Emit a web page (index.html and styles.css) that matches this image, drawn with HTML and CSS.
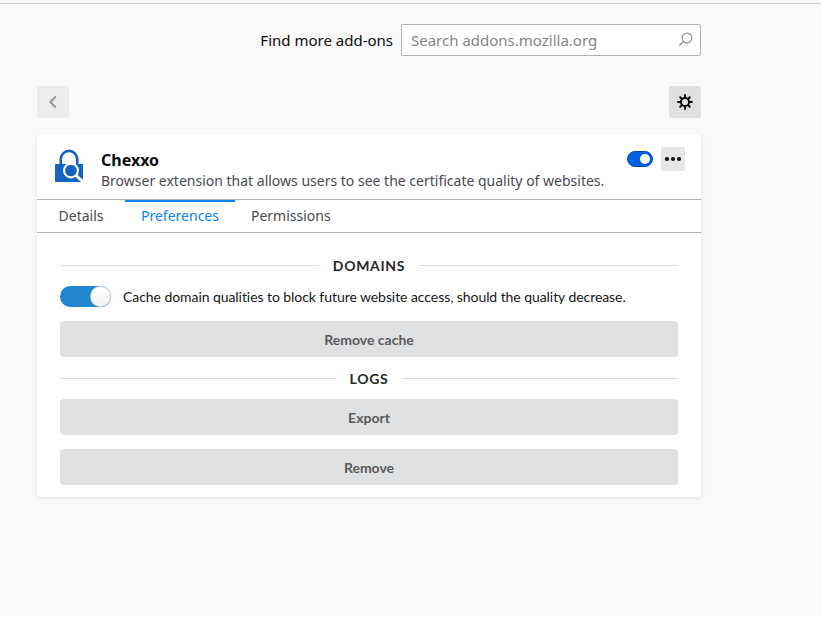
FILE: index.html
```html
<!DOCTYPE html>
<html lang="en">
<head>
<meta charset="utf-8">
<title>Add-ons Manager</title>
<link rel="stylesheet" href="styles.css">
</head>
<body>
<main class="page">
  <div class="search-row">
    <label class="search-label" for="search">Find more add-ons</label>
    <div class="search-box">
      <input id="search" class="search-input" type="text" placeholder="Search addons.mozilla.org">
      <svg class="search-icon" width="16" height="16" viewBox="0 0 16 16" fill="none" stroke="#979797" stroke-width="1.2"><circle cx="9" cy="6" r="4.9"/><path d="M5.4 9.5L1.4 13.5" stroke-width="1.5"/></svg>
    </div>
  </div>
  <div class="toolbar">
    <button class="tool back" aria-label="Back"><svg width="16" height="16" viewBox="0 0 16 16" fill="none" stroke="#979797" stroke-width="2" stroke-linecap="round" stroke-linejoin="round"><path d="M10.3 3L5.3 8l5 5"/></svg></button>
    <button class="tool" aria-label="Tools"><svg width="16" height="16" viewBox="0 0 16 16" fill="none" stroke="#0c0c0d" stroke-width="2"><circle cx="8" cy="8" r="4.1"/><path stroke-linecap="round" d="M8 1v2.500M8 12.500v2.500M1 8h2.500M12.500 8H15M3.200 3.200l1.600 1.600M11.200 11.200l1.600 1.600M3.200 12.800l1.600-1.600M11.200 4.800l1.600-1.600"/></svg></button>
  </div>
  <section class="card">
    <header class="addon">
      <svg class="addon-icon" width="32" height="34" viewBox="0 0 32 34"><path d="M5.800 16V10.100a8.200 8.200 0 0 1 16.400 0V16" fill="none" stroke="#1565c0" stroke-width="2.600"/><rect y="15" width="28" height="18" rx="1" fill="#1565c0"/><path d="M20.500 26L30 34.500" stroke="#fff" stroke-width="3"/><circle cx="16" cy="21.500" r="6.900" fill="#1565c0" stroke="#fff" stroke-width="2.100"/></svg>
      <div class="addon-text">
        <h1 class="addon-name">Chexxo</h1>
        <p class="addon-desc">Browser extension that allows users to see the certificate quality of websites.</p>
      </div>
      <div class="addon-actions">
        <span class="enable-toggle" role="switch" aria-checked="true"></span>
        <button class="more" aria-label="More options"><svg width="16" height="16" viewBox="0 0 16 16" fill="#151515"><circle cx="2" cy="8" r="2.100"/><circle cx="8" cy="8" r="2.100"/><circle cx="14" cy="8" r="2.100"/></svg></button>
      </div>
    </header>
    <nav class="tabs">
      <button class="tab">Details</button>
      <button class="tab active">Preferences</button>
      <button class="tab">Permissions</button>
    </nav>
    <div class="options">
      <h2 class="divider">DOMAINS</h2>
      <div class="cache-row">
        <span class="slider" role="switch" aria-checked="true"></span>
        <span class="cache-label">Cache domain qualities to block future website access, should the quality decrease.</span>
      </div>
      <button class="action">Remove cache</button>
      <h2 class="divider logs">LOGS</h2>
      <button class="action">Export</button>
      <button class="action spaced">Remove</button>
    </div>
  </section>
</main>
</body>
</html>
```
FILE: styles.css
```css
* { box-sizing: border-box; }
body {
  margin: 0;
  padding-top: 3px;
  background: #f9f9f9;
  font-family: "Noto Sans", sans-serif;
  color: #0c0c0d;
  min-height: 617px;
}
button { border: 0; padding: 0; margin: 0; font: inherit; }
svg { display: block; flex: none; }
.page { border-top: 1px solid #cdcdcd; padding: 20px 120px 0 37px; }
.search-row { display: flex; justify-content: flex-end; align-items: center; gap: 8px; height: 32px; }
.search-label { font-size: 15px; line-height: 32px; }
.search-box {
  display: flex;
  align-items: center;
  width: 300px;
  height: 32px;
  padding: 0 7px 0 9px;
  background: #fff;
  border: 1px solid #b1b1b1;
  border-radius: 2px;
}
.search-input { flex: 1; min-width: 0; border: 0; padding: 0; outline: 0; font: 15px "Noto Sans", sans-serif; background: transparent; }
.search-input::placeholder { color: #858585; opacity: 1; }
.search-icon { margin-right: -1px; }
.toolbar { display: flex; justify-content: space-between; margin-top: 30px; }
.tool { display: grid; place-items: center; width: 32px; height: 32px; border-radius: 2px; background: #e0e0e0; }
.tool.back { background: #ededed; }
.card { height: 363px; margin-top: 16px; background: #fff; border-radius: 4px; box-shadow: 0 1px 4px rgba(12, 12, 13, .1); }
.addon { display: flex; height: 65px; padding: 13px 16px 0 18px; }
.addon-icon { margin-top: 2px; }
.addon-text { flex: 1; margin-left: 14px; }
.addon-name { margin: 0; padding-top: 1px; font-size: 16px; line-height: 25px; font-weight: 700; }
.addon-desc { margin: -3px 0 0; font-size: 14px; line-height: 22px; color: #4a4a4f; white-space: nowrap; }
.addon-actions { display: flex; align-items: center; gap: 8px; height: 24px; }
.enable-toggle { display: flex; align-items: center; justify-content: flex-end; width: 26px; height: 16px; padding-right: 2px; border: 1px solid #0048bd; border-radius: 8px; background: #0060df; }
.enable-toggle::after { content: ""; width: 10px; height: 10px; border-radius: 50%; background: #fff; }
.more { display: grid; place-items: center; width: 24px; height: 24px; border-radius: 2px; background: #e6e6e6; }
.tabs { display: flex; height: 34px; border-top: 1px solid #b1b1b1; border-bottom: 1px solid #b1b1b1; }
.tab { min-width: 88px; padding: 0 16px 2px; border-top: 2px solid transparent; background: transparent; font-size: 14px; line-height: 28px; color: #4a4a4f; }
.tab.active { border-top-color: #0a84ff; color: #0a84ff; }
.options { padding: 21px 23px 0; font-family: Lato, sans-serif; }
.divider { display: flex; align-items: center; gap: 14px; height: 22px; margin: 0; font-size: 14px; font-weight: 700; letter-spacing: .7px; color: #262728; }
.divider::before, .divider::after { content: ""; flex: 1; height: 1px; background: #dcdddd; }
.divider.logs { margin: 10px 0 10px; }
.cache-row { display: flex; align-items: center; height: 21px; margin: 10px 0 14px; }
.slider { display: flex; justify-content: flex-end; width: 51px; height: 21px; border-radius: 11px; background: #2185d0; }
.slider::after { content: ""; width: 21px; height: 21px; border-radius: 50%; background: linear-gradient(#fff, #f3f3f3); box-shadow: 0 1px 2px rgba(34, 36, 38, .15), 0 0 0 1px rgba(34, 36, 38, .15) inset; }
.cache-label { margin-left: 12px; font-size: 14px; line-height: 21px; letter-spacing: -.065px; color: #151515; white-space: nowrap; }
.action { display: block; width: 100%; height: 36px; padding-top: 2px; border-radius: 4px; background: #e0e1e2; font-size: 14px; font-weight: 700; line-height: 34px; color: #5a5a5a; }
.action.spaced { margin-top: 14px; }
```
